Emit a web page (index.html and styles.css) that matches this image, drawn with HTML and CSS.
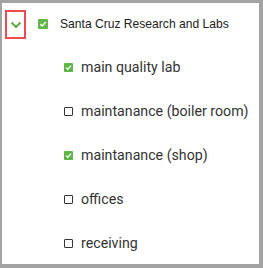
FILE: index.html
```html
<!DOCTYPE html>
<html>
<head>
<meta charset="utf-8">
<link rel="stylesheet" href="styles.css">
</head>
<body>
<div class="frame">
  <div class="root-row">
    <span class="toggle">
      <svg width="12" height="8" viewBox="0 0 12 8"><path d="M1.5 1.5 L6 6 L10.5 1.5" fill="none" stroke="#5fae45" stroke-width="2"/></svg>
    </span>
    <span class="cb checked root-cb">
      <svg width="10" height="10" viewBox="0 0 9 9"><path d="M2 4.6 L3.8 6.3 L7 2.8" fill="none" stroke="#fff" stroke-width="1.3"/></svg>
    </span>
    <span class="root-label">Santa Cruz Research and Labs</span>
  </div>
  <ul class="children">
    <li class="item"><span class="cb checked"><svg width="9" height="9" viewBox="0 0 9 9"><path d="M2 4.6 L3.8 6.3 L7 2.8" fill="none" stroke="#fff" stroke-width="1.3"/></svg></span><span class="label">main quality lab</span></li>
    <li class="item"><span class="cb"></span><span class="label">maintanance (boiler room)</span></li>
    <li class="item"><span class="cb checked"><svg width="9" height="9" viewBox="0 0 9 9"><path d="M2 4.6 L3.8 6.3 L7 2.8" fill="none" stroke="#fff" stroke-width="1.3"/></svg></span><span class="label">maintanance (shop)</span></li>
    <li class="item"><span class="cb"></span><span class="label">offices</span></li>
    <li class="item"><span class="cb"></span><span class="label">receiving</span></li>
  </ul>
</div>
</body>
</html>
```
FILE: styles.css
```css
html, body {
  margin: 0;
  padding: 0;
  background: #fff;
}
.frame {
  box-sizing: border-box;
  width: 263px;
  height: 268px;
  border-style: solid;
  border-color: #a3a3a3;
  border-width: 3px 4px 4px 2px;
  background: #fff;
  overflow: hidden;
}
.root-row {
  display: flex;
  align-items: center;
  height: 42px;
  padding-left: 3px;
}
.toggle {
  box-sizing: border-box;
  width: 21px;
  height: 29px;
  border: 2px solid #ef4a4f;
  display: flex;
  align-items: center;
  justify-content: center;
  padding-top: 2px;
}
.cb {
  box-sizing: border-box;
  width: 9px;
  height: 9px;
  border: 1.5px solid #333;
  border-radius: 1px;
  display: flex;
  flex: none;
}
.cb.checked {
  background: #5fb548;
  border: none;
}
.cb svg { display: block; }
.root-cb {
  width: 10px;
  height: 10px;
  margin-left: 12px;
}
.root-label {
  margin-left: 12px;
  font-family: "Liberation Sans", Arial, sans-serif;
  font-size: 12.1px;
  color: #222;
}
.children {
  list-style: none;
  margin: 0;
  padding: 0 0 0 62px;
}
.item {
  display: flex;
  align-items: center;
  height: 44px;
}
.label {
  margin-left: 8px;
  font-family: Roboto, "Liberation Sans", sans-serif;
  font-size: 14.2px;
  color: #333;
}
```
